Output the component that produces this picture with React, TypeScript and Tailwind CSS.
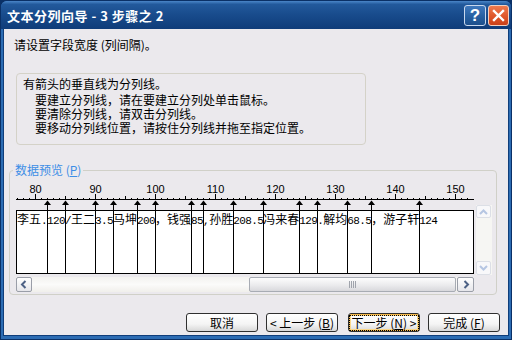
import React from "react";

const CJK = '"Noto Sans CJK SC", "Noto Sans", sans-serif';

const cols = [5, 8, 13, 16, 20, 23, 29, 31, 36, 41, 47, 50, 55, 59, 67];

const segs: [string, boolean][] = [
  ["李五", true],
  [".120/", false],
  ["王二", true],
  ["3.5", false],
  ["马坤", true],
  ["200", false],
  ["，钱强", true],
  ["85,", false],
  ["孙胜", true],
  ["208.5", false],
  ["冯来春", true],
  ["129.", false],
  ["解均", true],
  ["68.5", false],
  ["，游子轩", true],
  ["124", false],
];

function Ruler() {
  const items: React.ReactNode[] = [];
  for (let v = 77; v <= 153; v++) {
    const x = 1 + 6 * (v - 77) + 0.5;
    if (x > 457) break;
    if (v % 10 === 0) {
      items.push(<line key={"t" + v} x1={x} x2={x} y1={11} y2={16} stroke="#000" strokeWidth={1} />);
      items.push(
        <text key={"n" + v} x={x} y={9.5} textAnchor="middle" fontSize={11} fontFamily='"Liberation Sans", sans-serif' fill="#000">
          {v}
        </text>
      );
    } else if (v % 5 === 0) {
      items.push(<line key={"t" + v} x1={x} x2={x} y1={13} y2={16} stroke="#000" strokeWidth={1} />);
    } else {
      items.push(<rect key={"t" + v} x={x - 0.5} y={15} width={1} height={1} fill="#000" />);
    }
  }
  return (
    <svg width={458} height={27} className="block">
      <rect x={0} y={16} width={458} height={1} fill="#000" />
      {items}
    </svg>
  );
}

function Arrows() {
  return (
    <svg width={458} height={91} className="absolute left-0 top-0 pointer-events-none">
      {cols.map((c) => {
        const x = 1 + 6 * c;
        return (
          <g key={c}>
            <polygon points={`${x + 0.5},17.5 ${x - 3},22 ${x + 4},22`} fill="#000" />
            <rect x={x} y={21} width={1} height={69} fill="#000" />
          </g>
        );
      })}
    </svg>
  );
}

function Btn({ children, focused }: { children: React.ReactNode; focused?: boolean }) {
  return (
    <div
      className={
        "w-[72px] h-[19px] rounded-[3px] border border-[#2f2f2f] flex items-center justify-center text-[12px] leading-none text-black bg-[linear-gradient(180deg,#ffffff_0%,#f4f4f4_60%,#d8d8d8_100%)] " +
        (focused ? "shadow-[inset_0_0_0_1px_#f5b84a,inset_0_0_0_2px_#fbd88a]" : "")
      }
      style={{ fontFamily: CJK }}
    >
      <div className={focused ? "outline outline-1 outline-dotted outline-black px-[2px] py-[1px]" : ""}>{children}</div>
    </div>
  );
}

export default function App() {
  return (
    <div className="w-[512px] h-[340px] bg-[#0a3066] p-[1px] overflow-hidden" style={{ fontFamily: CJK }}>
      <div className="w-full h-full bg-[#2c6cb3] flex flex-col rounded-t-[6px]">
        {/* Title bar */}
        <div className="h-[28px] flex items-center justify-between pl-[6px] pr-[2px] rounded-t-[6px] bg-[linear-gradient(180deg,#4a86c8_0%,#22599c_12%,#184b8c_50%,#0f3c79_100%)]">
          <span className="text-white font-bold text-[13px] leading-none tracking-[0.5px]" style={{ fontFamily: CJK }}>
            文本分列向导 - 3 步骤之 2
          </span>
          <div className="flex gap-[2px] items-center">
            <div className="w-[22px] h-[21px] rounded-[3px] border border-[#c8d8ee] bg-[linear-gradient(180deg,#3f78bd_0%,#255e9f_60%,#1d4f8c_100%)] flex items-center justify-center text-white font-bold text-[17px] leading-none" style={{ fontFamily: '"Liberation Sans", sans-serif' }}>
              ?
            </div>
            <div className="w-[21px] h-[21px] rounded-[3px] border border-[#f2d0c0] bg-[linear-gradient(180deg,#ef7a4e_0%,#dd5428_60%,#c8401a_100%)] flex items-center justify-center">
              <svg width="13" height="13" viewBox="0 0 13 13">
                <path d="M2 2 L11 11 M11 2 L2 11" stroke="#fff" strokeWidth="2.4" strokeLinecap="square" />
              </svg>
            </div>
          </div>
        </div>
        {/* Body */}
        <div className="flex-1 mx-[2px] mb-[3px] border-l border-r border-b border-[#0f3d7a] bg-[#ebe9ed] flex flex-col text-[12px] text-black">
          <div className="mt-[9px] ml-[10px] h-[14px] leading-[14px]">请设置字段宽度 (列间隔)。</div>
          <div className="mt-[21px] ml-[12px] w-[350px] h-[72px] rounded-[4px] border border-[#d4d2c8] bg-[#ebe9ed]">
            <div className="pt-[3px] pl-[6px] leading-[14px]">有箭头的垂直线为分列线。</div>
            <div className="mt-[2px] pl-[18px] leading-[14px]">
              <div>要建立分列线，请在要建立分列处单击鼠标。</div>
              <div>要清除分列线，请双击分列线。</div>
              <div>要移动分列线位置，请按住分列线并拖至指定位置。</div>
            </div>
          </div>
          {/* Group box */}
          <div className="relative mt-[25px] ml-[5px] w-[488px] h-[125px] rounded-[4px] border border-[#d0d0c8]">
            <div className="absolute left-[3px] top-[-9px] px-[2px] bg-[#ebe9ed] text-[#3d8ee6] leading-[16px] text-[12px]">
              数据预览 (<span className="underline">P</span>)
            </div>
            <div className="flex pt-[12px] pl-[6px] gap-[2px]">
              <div className="flex flex-col">
                <div className="relative w-[458px] h-[91px]">
                  <Ruler />
                  <div className="h-[64px] border border-black bg-white pt-[1px] whitespace-nowrap leading-[14px] flex items-baseline">
                    {segs.map(([t, c], i) =>
                      c ? (
                        <span key={i} className="text-[12px]" style={{ fontFamily: CJK }}>
                          {t}
                        </span>
                      ) : (
                        <span key={i} className="text-[11px] tracking-[-0.6px]" style={{ fontFamily: '"Liberation Mono", monospace' }}>
                          {t}
                        </span>
                      )
                    )}
                  </div>
                  <Arrows />
                </div>
                {/* horizontal scrollbar */}
                <div className="mt-[3px] w-[458px] h-[15px] flex bg-[linear-gradient(180deg,#f3f2ef_0%,#fbfbfa_50%,#f0efeb_100%)]">
                  <div className="w-[16px] h-[15px] rounded-[2px] border border-[#9a9ea8] bg-[linear-gradient(180deg,#ffffff_0%,#e6e6ea_100%)] flex items-center justify-center">
                    <svg width="8" height="9" viewBox="0 0 8 9">
                      <path d="M5.5 1 L2 4.5 L5.5 8" stroke="#4d6185" strokeWidth="2" fill="none" />
                    </svg>
                  </div>
                  <div className="flex-1 flex justify-end pr-[1px]">
                    <div className="w-[207px] h-[15px] rounded-[2px] border border-[#a8acb4] bg-[linear-gradient(180deg,#fdfdfd_0%,#ebebed_55%,#d8d8dc_100%)] flex items-center justify-center gap-[1px]">
                      {[0, 1, 2, 3].map((k) => (
                        <div key={k} className="w-[1px] h-[7px] bg-[#a0a4ac]" />
                      ))}
                    </div>
                  </div>
                  <div className="w-[17px] h-[15px] rounded-[2px] border border-[#9a9ea8] bg-[linear-gradient(180deg,#ffffff_0%,#e6e6ea_100%)] flex items-center justify-center">
                    <svg width="8" height="9" viewBox="0 0 8 9">
                      <path d="M2.5 1 L6 4.5 L2.5 8" stroke="#4d6185" strokeWidth="2" fill="none" />
                    </svg>
                  </div>
                </div>
              </div>
              {/* vertical scrollbar */}
              <div className="mt-[22px] w-[16px] h-[70px] bg-[#f6f6f3] flex flex-col justify-between">
                <div className="w-[15px] h-[13px] rounded-[2px] border border-[#dcdfe6] bg-[#f8f8fa] flex items-center justify-center">
                  <svg width="9" height="6" viewBox="0 0 9 6">
                    <path d="M1 5 L4.5 1.5 L8 5" stroke="#b6c6e2" strokeWidth="2" fill="none" />
                  </svg>
                </div>
                <div className="w-[15px] h-[14px] rounded-[2px] border border-[#dcdfe6] bg-[#f8f8fa] flex items-center justify-center">
                  <svg width="9" height="6" viewBox="0 0 9 6">
                    <path d="M1 1 L4.5 4.5 L8 1" stroke="#b6c6e2" strokeWidth="2" fill="none" />
                  </svg>
                </div>
              </div>
            </div>
          </div>
          {/* Buttons */}
          <div className="mt-[18px] flex justify-end pr-[8px]">
            <Btn>取消</Btn>
            <div className="w-[8px]" />
            <Btn>&lt; 上一步 (<span className="underline">B</span>)</Btn>
            <div className="w-[10px]" />
            <Btn focused>
              下一步 (<span className="underline">N</span>) &gt;
            </Btn>
            <div className="w-[8px]" />
            <Btn>
              完成 (<span className="underline">F</span>)
            </Btn>
          </div>
        </div>
      </div>
    </div>
  );
}
